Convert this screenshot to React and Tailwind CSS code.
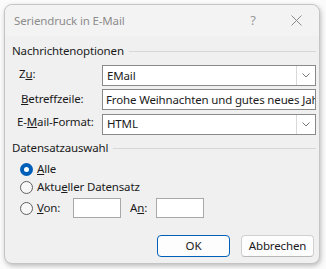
import React from "react";

function Radio({ checked }) {
  if (checked) {
    return (
      <span className="w-[13px] h-[13px] rounded-full bg-[#005fb8] flex items-center justify-center shrink-0">
        <span className="w-[5px] h-[5px] rounded-full bg-white" />
      </span>
    );
  }
  return <span className="w-[13px] h-[13px] rounded-full border border-[#616161] bg-[#f7f7f7] shrink-0" />;
}

function Combo({ value }) {
  return (
    <div className="flex-1 h-[21px] border border-[#8a8a8a] bg-white flex items-center">
      <span className="flex-1 pl-[4px] whitespace-nowrap overflow-hidden">{value}</span>
      <span className="w-[19px] h-[19px] border-l border-[#d9d9d9] flex items-center justify-center">
        <svg width="8" height="5" viewBox="0 0 8 5" fill="none">
          <path d="M0.5 0.5 L4 4 L7.5 0.5" stroke="#7a7a7a" strokeWidth="1" />
        </svg>
      </span>
    </div>
  );
}

export default function App() {
  return (
    <div
      className="w-[326px] h-[269px] bg-[#fbfbfb] pt-[4px] pl-[4px] text-[11.5px] tracking-[-0.15px] text-[#1b1b1b]"
      style={{ fontFamily: '"Noto Sans", "Open Sans", sans-serif' }}
    >
      <div className="w-[316px] h-[260px] rounded-[8px] border border-[#c4c4c4] bg-[#f0f0f0] shadow-[1px_2px_5px_rgba(0,0,0,0.25)] flex flex-col">
        {/* title bar */}
        <div className="h-[31px] flex items-center pl-[9px] text-[#8c8c8c] bg-[#f3f3f3] rounded-t-[8px]">
          <span className="flex-1">Seriendruck in E-Mail</span>
          <span className="w-[20px] text-center mr-[23px] text-[13px] text-[#9a9a9a]">?</span>
          <span className="w-[20px] flex justify-center mr-[13px]">
            <svg width="11" height="11" viewBox="0 0 11 11">
              <path d="M0.5 0.5 L10.5 10.5 M10.5 0.5 L0.5 10.5" stroke="#8c8c8c" strokeWidth="1" />
            </svg>
          </span>
        </div>

        <div className="flex flex-col pl-[7px] pr-[3px]">
          {/* Nachrichtenoptionen */}
          <div className="h-[18px] mt-[6px] flex items-center">
            <span>Nachrichtenoptionen</span>
            <span className="flex-1 h-px bg-[#d7d7d7] ml-[5px]" />
          </div>

          <div className="flex flex-col gap-[3px] mt-[5px]">
            <div className="flex items-center h-[21px]">
              <span className="w-[90px] pl-[7px] -mt-[3px]">
                Z<span className="underline">u</span>:
              </span>
              <Combo value="EMail" />
            </div>
            <div className="flex items-center h-[21px]">
              <span className="w-[90px] pl-[9px] -mt-[2px]">
                <span className="underline">B</span>etreffzeile:
              </span>
              <div className="flex-1 h-[21px] border border-[#8a8a8a] bg-white flex items-center overflow-hidden">
                <span className="pl-[3px] whitespace-nowrap">Frohe Weihnachten und gutes neues Jahr!</span>
              </div>
            </div>
            <div className="flex items-center h-[22px]">
              <span className="w-[90px] pl-[5px] -mt-[5px]">
                E-<span className="underline">M</span>ail-Format:
              </span>
              <Combo value="HTML" />
            </div>
          </div>

          {/* Datensatzauswahl */}
          <div className="h-[18px] mt-[4px] flex items-center">
            <span>Datensatzauswahl</span>
            <span className="flex-1 h-px bg-[#d7d7d7] ml-[5px]" />
          </div>

          <div className="flex flex-col pl-[8px] mt-[3px]">
            <div className="flex items-center h-[18px] gap-[4px]">
              <Radio checked />
              <span>
                <span className="underline">A</span>lle
              </span>
            </div>
            <div className="flex items-center h-[18px] gap-[4px]">
              <Radio />
              <span>
                Aktu<span className="underline">e</span>ller Datensatz
              </span>
            </div>
            <div className="flex items-center h-[20px] gap-[4px] mt-[2px]">
              <Radio />
              <span className="w-[32px]">
                <span className="underline">V</span>on:
              </span>
              <span className="w-[48px] h-[20px] border border-[#a8a8a8] bg-white" />
              <span className="w-[22px] ml-[5px]">
                A<span className="underline">n</span>:
              </span>
              <span className="w-[48px] h-[20px] border border-[#a8a8a8] bg-white" />
            </div>
          </div>

          {/* buttons */}
          <div className="flex justify-end gap-[11px] mt-[17px] pr-[2px]">
            <button className="w-[73px] h-[22px] rounded-[4px] border border-[#005fb8] bg-[#fdfdfd] text-[#1b1b1b]">
              OK
            </button>
            <button className="w-[73px] h-[22px] rounded-[4px] border border-[#d0d0d0] border-b-[#b8b8b8] bg-[#fdfdfd] text-[#1b1b1b]">
              Abbrechen
            </button>
          </div>
        </div>
      </div>
    </div>
  );
}
